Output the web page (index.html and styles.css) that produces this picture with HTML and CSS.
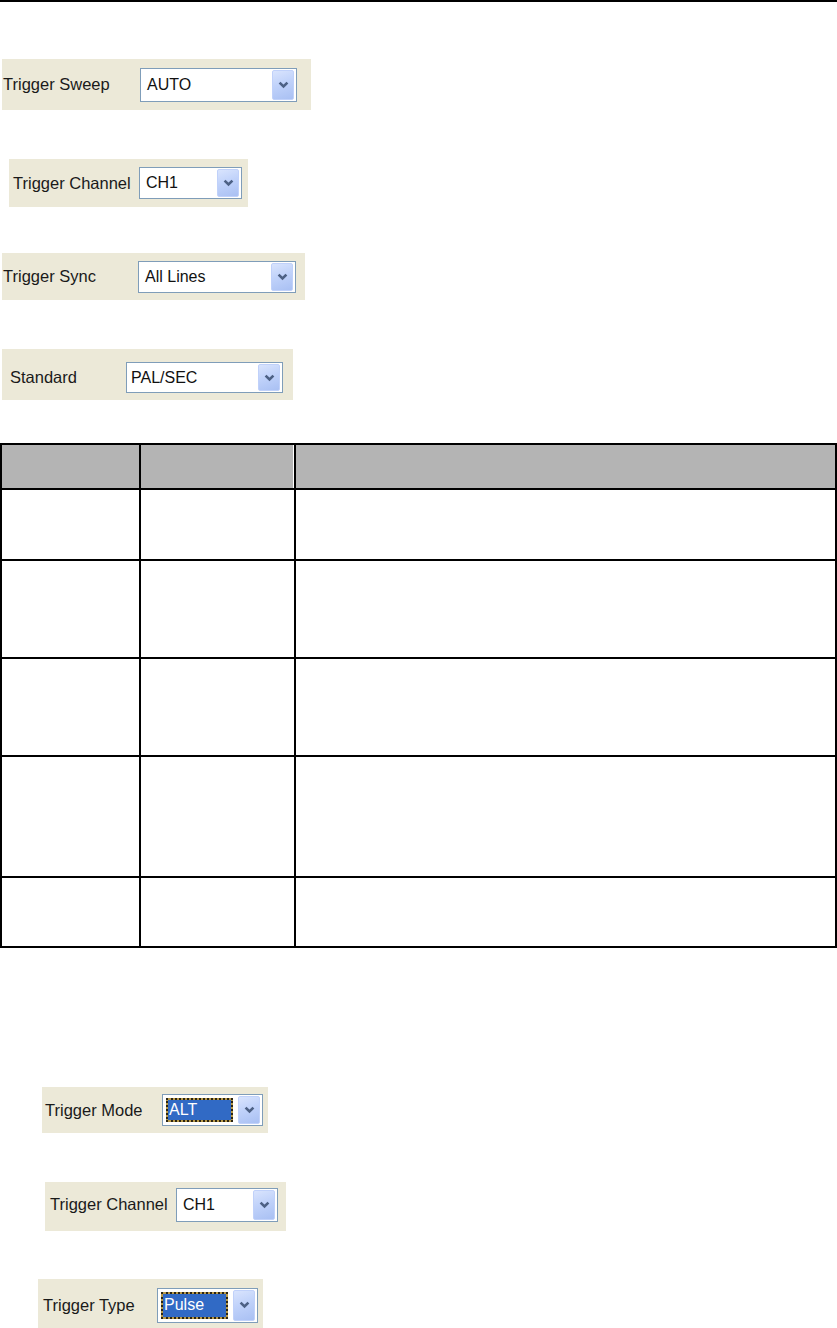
FILE: index.html
```html
<!DOCTYPE html>
<html>
<head>
<meta charset="utf-8">
<link rel="stylesheet" href="styles.css">
</head>
<body>
<div class="rule"></div>

<div class="panel w1">
  <span class="label">Trigger Sweep</span>
  <div class="combo">
    <span class="value">AUTO</span>
    <span class="btn"><svg viewBox="0 0 11 8" width="11" height="8"><polyline points="1.6,1.6 5.5,5.5 9.4,1.6" fill="none" stroke="#4d6185" stroke-width="2.6"/></svg></span>
  </div>
</div>

<div class="panel w2">
  <span class="label">Trigger Channel</span>
  <div class="combo">
    <span class="value">CH1</span>
    <span class="btn"><svg viewBox="0 0 11 8" width="11" height="8"><polyline points="1.6,1.6 5.5,5.5 9.4,1.6" fill="none" stroke="#4d6185" stroke-width="2.6"/></svg></span>
  </div>
</div>

<div class="panel w3">
  <span class="label">Trigger Sync</span>
  <div class="combo">
    <span class="value">All Lines</span>
    <span class="btn"><svg viewBox="0 0 11 8" width="11" height="8"><polyline points="1.6,1.6 5.5,5.5 9.4,1.6" fill="none" stroke="#4d6185" stroke-width="2.6"/></svg></span>
  </div>
</div>

<div class="panel w4">
  <span class="label">Standard</span>
  <div class="combo">
    <span class="value">PAL/SEC</span>
    <span class="btn"><svg viewBox="0 0 11 8" width="11" height="8"><polyline points="1.6,1.6 5.5,5.5 9.4,1.6" fill="none" stroke="#4d6185" stroke-width="2.6"/></svg></span>
  </div>
</div>

<table class="grid">
  <colgroup><col class="c1"><col class="c2"><col class="c3"></colgroup>
  <tr class="head"><td></td><td class="gap"></td><td></td></tr>
  <tr class="r1"><td></td><td></td><td></td></tr>
  <tr class="r2"><td></td><td></td><td></td></tr>
  <tr class="r3"><td></td><td></td><td></td></tr>
  <tr class="r4"><td></td><td></td><td></td></tr>
  <tr class="r5"><td></td><td></td><td></td></tr>
</table>

<div class="panel w5">
  <span class="label">Trigger Mode</span>
  <div class="combo">
    <span class="focus"><span class="value sel">ALT</span></span>
    <span class="btn"><svg viewBox="0 0 11 8" width="11" height="8"><polyline points="1.6,1.6 5.5,5.5 9.4,1.6" fill="none" stroke="#4d6185" stroke-width="2.6"/></svg></span>
  </div>
</div>

<div class="panel w6">
  <span class="label">Trigger Channel</span>
  <div class="combo">
    <span class="value">CH1</span>
    <span class="btn"><svg viewBox="0 0 11 8" width="11" height="8"><polyline points="1.6,1.6 5.5,5.5 9.4,1.6" fill="none" stroke="#4d6185" stroke-width="2.6"/></svg></span>
  </div>
</div>

<div class="panel w7">
  <span class="label">Trigger Type</span>
  <div class="combo">
    <span class="focus"><span class="value sel">Pulse</span></span>
    <span class="btn"><svg viewBox="0 0 11 8" width="11" height="8"><polyline points="1.6,1.6 5.5,5.5 9.4,1.6" fill="none" stroke="#4d6185" stroke-width="2.6"/></svg></span>
  </div>
</div>
</body>
</html>
```

FILE: styles.css
```css
html, body {
  margin: 0;
  padding: 0;
  background: #fff;
  overflow: hidden;
}
body {
  font-family: "Liberation Sans", Arial, sans-serif;
  font-size: 16px;
  color: #111;
  width: 837px;
  height: 1328px;
}
.rule {
  height: 2px;
  background: #000;
}

/* XP style property panels */
.panel {
  display: flex;
  align-items: center;
  box-sizing: border-box;
  background: #ece9d8;
}
.label {
  box-sizing: border-box;
  flex: none;
  white-space: nowrap;
  font-size: 16.5px;
  color: #1a1a1a;
}
.combo {
  box-sizing: border-box;
  display: flex;
  align-items: stretch;
  background: #fff;
  border: 1px solid #7f9db9;
  padding: 1px 2px 1px 1px;
}
.value {
  flex: 1;
  display: flex;
  align-items: center;
  padding-left: 5px;
  white-space: nowrap;
  color: #111;
}
.btn {
  flex: none;
  width: 22px;
  box-sizing: border-box;
  display: flex;
  align-items: center;
  justify-content: center;
  border: 1px solid #c0d1fa;
  border-radius: 2px;
  background: linear-gradient(160deg, #d9e4fd 0%, #c0d2fa 45%, #a9c0f3 100%);
}
.focus {
  flex: 1;
  display: flex;
  margin: 2px 5px 2px 2px;
  background: #b89a48;
}
.value.sel {
  padding-left: 1px;
  border: 2px dotted #2a2414;
  background: #316ac5;
  background-clip: padding-box;
  color: #fff;
}

.w1 { margin: 57px 0 0 2px; width: 309px; height: 51px; }
.w1 .label { width: 138px; padding-left: 1px; }
.w1 .combo { width: 157px; height: 34px; }

.w2 { margin: 49px 0 0 9px; width: 239px; height: 48px; }
.w2 .label { width: 130px; padding-left: 4px; }
.w2 .combo { width: 103px; height: 32px; }

.w3 { margin: 46px 0 0 2px; width: 303px; height: 47px; }
.w3 .label { width: 136px; padding-left: 1px; }
.w3 .combo { width: 158px; height: 32px; }

.w4 { margin: 49px 0 0 2px; width: 291px; height: 51px; padding-top: 6px; }
.w4 .label { width: 124px; padding-left: 8px; }
.w4 .combo { width: 157px; height: 31px; }
.w4 .value { padding-left: 3px; }

/* table */
.grid {
  margin-top: 43px;
  width: 837px;
  table-layout: fixed;
  border-collapse: separate;
  border-spacing: 0;
  border-top: 2px solid #000;
  border-left: 2px solid #000;
}
.grid .c1 { width: 139px; }
.grid .c2 { width: 155px; }
.grid td {
  padding: 0;
  border-right: 2px solid #000;
  border-bottom: 2px solid #000;
}
.grid .head td { background: #b4b4b4; }
.grid .head .gap { box-shadow: inset -1px 0 0 #fff; }
.grid .head { height: 45px; }
.grid .r1 { height: 71px; }
.grid .r2 { height: 98px; }
.grid .r3 { height: 98px; }
.grid .r4 { height: 121px; }
.grid .r5 { height: 70px; }

.w5 { margin: 139px 0 0 42px; width: 226px; height: 46px; }
.w5 .label { width: 120px; padding-left: 3px; }
.w5 .combo { width: 101px; height: 32px; }

.w6 { margin: 49px 0 0 45px; width: 241px; height: 49px; padding-bottom: 4px; }
.w6 .label { width: 131px; padding-left: 5px; }
.w6 .combo { width: 102px; height: 34px; }

.w7 { margin: 48px 0 0 38px; width: 225px; height: 52px; }
.w7 .label { width: 119px; padding-left: 5px; }
.w7 .combo { width: 101px; height: 35px; }
```
